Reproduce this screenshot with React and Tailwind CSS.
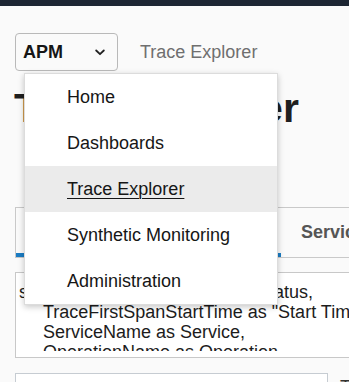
import React from "react";

export default function App() {
  const font = { fontFamily: '"Liberation Sans", Arial, Helvetica, sans-serif' };
  const items = ["Home", "Dashboards", "Trace Explorer", "Synthetic Monitoring", "Administration"];
  return (
    <div className="relative w-[349px] h-[382px] overflow-hidden bg-[#fafafa] text-[#1a1a1a]" style={font}>
      <div className="h-[6px] bg-[#1d2633]" />
      <div className="pl-[15px]">
        <div className="mt-[27px] flex items-center">
          <div className="flex h-[38px] w-[103px] shrink-0 items-center justify-between rounded-[4px] border border-[#b9b9b9] pl-[7px] pr-[12px]">
            <span className="text-[18px] font-bold leading-none text-[#161616]">APM</span>
            <svg width="10" height="7" viewBox="0 0 10 7" className="mt-[1px]">
              <path d="M1.2 1.5 L5 5.2 L8.8 1.5" fill="none" stroke="#222" strokeWidth="1.8" strokeLinecap="round" strokeLinejoin="round" />
            </svg>
          </div>
          <span className="ml-[22px] text-[18px] leading-none text-[#6f6f6f] whitespace-nowrap">Trace Explorer</span>
        </div>
        <h1 className="mt-[17px] ml-[-1px] text-[41px] font-bold leading-[40px] text-[#1f1f1f] whitespace-nowrap">Trace Explorer</h1>
        <div className="mt-[79px] flex h-[51px] w-[600px] border-y border-l border-[#c9c9c9]">
          <div className="relative flex w-[265px] shrink-0 items-center justify-center text-[18px] font-bold text-[#2a2a2a]">
            Traces
            <div className="absolute bottom-0 left-0 right-0 h-[4px] bg-[#1b7cc3]" />
          </div>
          <div className="flex items-center pl-[20px] text-[18px] font-bold text-[#555] whitespace-nowrap">Services</div>
        </div>
        <div className="mt-[14px] h-[86px] w-[600px] border border-[#c8c8c8] bg-white">
          <div className="h-[78px] overflow-hidden pt-[9px] text-[18px] leading-[20px] text-[#1c1c1c] whitespace-nowrap">
            <div className="pl-[3px]">show (traces) TraceStatus as Status,</div>
            <div className="pl-[27px]">TraceFirstSpanStartTime as "Start Time",</div>
            <div className="pl-[27px]">ServiceName as Service,</div>
            <div className="pl-[27px]">OperationName as Operation,</div>
          </div>
        </div>
        <div className="mt-[15px] flex w-[600px] items-start">
          <div className="h-[40px] w-[313px] shrink-0 border border-[#c6ccd2] bg-white" />
          <span className="ml-[12px] mt-[1px] text-[18px] text-[#333] whitespace-nowrap">Time</span>
        </div>
      </div>

      <div className="absolute left-[24px] top-[73px] w-[254px] border border-[#dcdcdc] bg-white shadow-[0_2px_6px_rgba(0,0,0,0.22)]">
        {items.map((it) => (
          <div
            key={it}
            className={
              it === "Trace Explorer"
                ? "flex h-[46px] items-center bg-[#ebebeb] pl-[42px] text-[18px] text-[#161616] underline underline-offset-[3px] decoration-1"
                : "flex h-[46px] items-center pl-[42px] text-[18px] text-[#161616]"
            }
          >
            {it}
          </div>
        ))}
      </div>
    </div>
  );
}
